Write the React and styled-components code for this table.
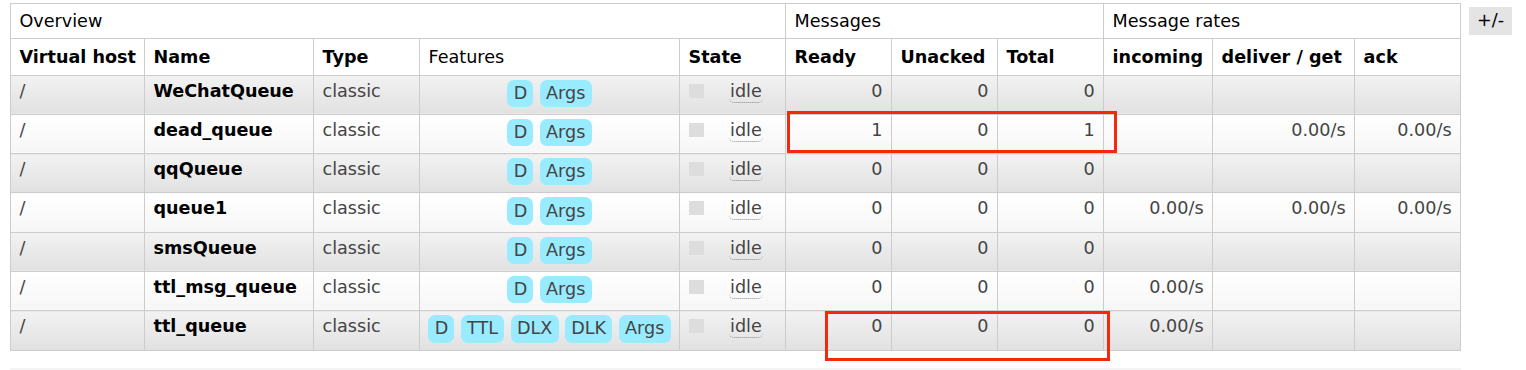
import React from "react";
import styled, { createGlobalStyle } from "styled-components";

const GlobalStyle = createGlobalStyle`
  body {
    margin: 0;
    background: #fff;
    font-family: "DejaVu Sans", Verdana, sans-serif;
    font-size: 17.6px;
  }
`;

const Page = styled.div`
  position: relative;
  padding: 3px 0 0 10px;
  width: 1526px;
  height: 370px;
  box-sizing: border-box;
  overflow: hidden;
`;

const Row = styled.div`
  display: flex;
  align-items: flex-start;
  gap: 8px;
`;

const Table = styled.table`
  border-collapse: collapse;
  table-layout: fixed;
  width: 1451px;
  border: 1px solid #ccc;
`;

const GroupRow = styled.tr`
  height: 35px;
`;

const HeadRow = styled.tr`
  height: 36.5px;
`;

const GroupHead = styled.th`
  border: 1px solid #ccc;
  font-weight: normal;
  text-align: left;
  padding: 1px 8.5px 0;
  color: #000;
  background: #fff;
  line-height: 21px;
`;

const ColHead = styled.th`
  border: 1px solid #ccc;
  font-weight: ${(p) => (p.$plain ? "normal" : "bold")};
  text-align: left;
  padding: 1px 8.5px 0;
  color: #000;
  background: #fff;
  line-height: 21px;
  white-space: nowrap;
`;

const DataRow = styled.tr`
  height: 39.3px;
  td {
    background: ${(p) =>
      p.$alt
        ? "linear-gradient(to bottom, #f2f2f2 0%, #e1e1e1 100%)"
        : "linear-gradient(to bottom, #ffffff 0%, #f6f6f6 100%)"};
  }
`;

const Cell = styled.td`
  border: 1px solid #ccc;
  vertical-align: top;
  padding: 5px 8.5px 0;
  line-height: 21px;
  color: #444;
  white-space: nowrap;
  text-align: ${(p) => (p.$right ? "right" : "left")};
  font-weight: ${(p) => (p.$bold ? "bold" : "normal")};
  ${(p) => p.$bold && "color: #000;"}
`;

const FeatureCell = styled.td`
  border: 1px solid #ccc;
  vertical-align: top;
  padding: 4px 6px 0;
`;

const Pills = styled.div`
  display: flex;
  justify-content: center;
  gap: 6.5px;
`;

const Pill = styled.span`
  display: inline-block;
  background: #99ebff;
  color: #444;
  border-radius: 7px;
  padding: 3.2px 6.2px;
  line-height: 21px;
`;

const StateCell = styled.td`
  border: 1px solid #ccc;
  vertical-align: top;
  padding: 8px 9px 0;
`;

const StateWrap = styled.div`
  display: flex;
  align-items: flex-start;
`;

const StatusBox = styled.span`
  display: block;
  width: 15px;
  height: 14px;
  background: #ddd;
`;

const StateText = styled.span`
  margin-left: 25px;
  margin-top: -3px;
  line-height: 21px;
  color: #444;
  border-bottom: 1px dotted #888;
  border-radius: 0 0 5px 5px;
  padding: 0 1px;
`;

const Toggle = styled.div`
  margin-top: 4px;
  background: #e4e4e4;
  color: #000;
  padding: 3px 8px;
  line-height: 21.7px;
`;

const Divider = styled.div`
  position: absolute;
  left: 10px;
  top: 368px;
  width: 1451px;
  height: 2px;
  background: #f4f4f4;
`;

const Highlight = styled.div`
  position: absolute;
  box-sizing: border-box;
  border: 3px solid #f5290a;
  left: ${(p) => p.$x}px;
  top: ${(p) => p.$y}px;
  width: ${(p) => p.$w}px;
  height: ${(p) => p.$h}px;
  pointer-events: none;
`;

const widths = [134, 169, 106, 260, 106, 106, 106, 106, 109, 142, 106];

const queues = [
  { name: "WeChatQueue", features: ["D", "Args"], m: [0, 0, 0], r: ["", "", ""] },
  { name: "dead_queue", features: ["D", "Args"], m: [1, 0, 1], r: ["", "0.00/s", "0.00/s"] },
  { name: "qqQueue", features: ["D", "Args"], m: [0, 0, 0], r: ["", "", ""] },
  { name: "queue1", features: ["D", "Args"], m: [0, 0, 0], r: ["0.00/s", "0.00/s", "0.00/s"] },
  { name: "smsQueue", features: ["D", "Args"], m: [0, 0, 0], r: ["", "", ""] },
  { name: "ttl_msg_queue", features: ["D", "Args"], m: [0, 0, 0], r: ["0.00/s", "", ""] },
  { name: "ttl_queue", features: ["D", "TTL", "DLX", "DLK", "Args"], m: [0, 0, 0], r: ["0.00/s", "", ""] },
];

export default function App() {
  return (
    <Page>
      <GlobalStyle />
      <Row>
        <Table>
          <colgroup>
            {widths.map((w, i) => (
              <col key={i} style={{ width: w }} />
            ))}
          </colgroup>
          <thead>
            <GroupRow>
              <GroupHead colSpan={5}>Overview</GroupHead>
              <GroupHead colSpan={3}>Messages</GroupHead>
              <GroupHead colSpan={3}>Message rates</GroupHead>
            </GroupRow>
            <HeadRow>
              <ColHead>Virtual host</ColHead>
              <ColHead>Name</ColHead>
              <ColHead>Type</ColHead>
              <ColHead $plain>Features</ColHead>
              <ColHead>State</ColHead>
              <ColHead>Ready</ColHead>
              <ColHead>Unacked</ColHead>
              <ColHead>Total</ColHead>
              <ColHead>incoming</ColHead>
              <ColHead>deliver / get</ColHead>
              <ColHead>ack</ColHead>
            </HeadRow>
          </thead>
          <tbody>
            {queues.map((q, i) => (
              <DataRow key={q.name} $alt={i % 2 === 0}>
                <Cell>/</Cell>
                <Cell $bold>{q.name}</Cell>
                <Cell>classic</Cell>
                <FeatureCell>
                  <Pills>
                    {q.features.map((f) => (
                      <Pill key={f}>{f}</Pill>
                    ))}
                  </Pills>
                </FeatureCell>
                <StateCell>
                  <StateWrap>
                    <StatusBox />
                    <StateText>idle</StateText>
                  </StateWrap>
                </StateCell>
                {q.m.map((v, j) => (
                  <Cell key={"m" + j} $right>
                    {v}
                  </Cell>
                ))}
                {q.r.map((v, j) => (
                  <Cell key={"r" + j} $right>
                    {v}
                  </Cell>
                ))}
              </DataRow>
            ))}
          </tbody>
        </Table>
        <Toggle>+/-</Toggle>
      </Row>
      <Divider />
      <Highlight $x={787} $y={111} $w={330} $h={42} />
      <Highlight $x={825} $y={311} $w={285} $h={50} />
    </Page>
  );
}
